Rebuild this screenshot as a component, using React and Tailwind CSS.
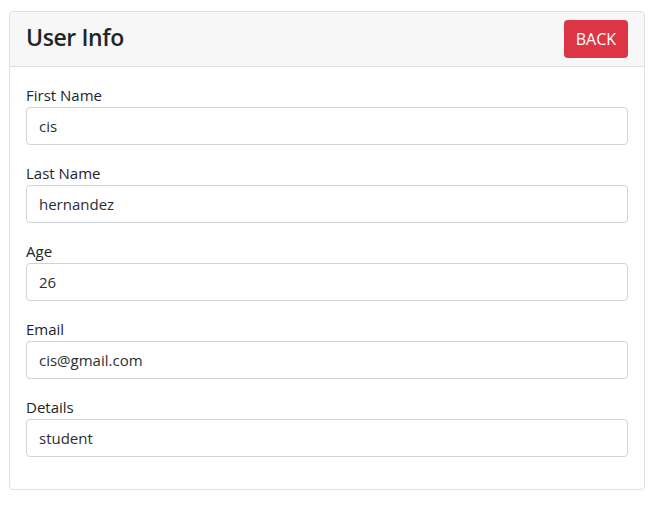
import { useState } from "react";

const fields = [
  { name: "firstName", label: "First Name", value: "cis" },
  { name: "lastName", label: "Last Name", value: "hernandez" },
  { name: "age", label: "Age", value: "26" },
  { name: "email", label: "Email", value: "cis@gmail.com" },
  { name: "details", label: "Details", value: "student" },
];

const App = () => {
  const [formData, setFormData] = useState(
    Object.fromEntries(fields.map((f) => [f.name, f.value]))
  );

  const handleChange = (e) => {
    setFormData({ ...formData, [e.target.name]: e.target.value });
  };

  return (
    <div
      className="min-h-[528px] bg-white pl-[9px] pt-[11px] text-[#212529]"
      style={{ fontFamily: '"Open Sans", "Noto Sans", Arial, sans-serif' }}
    >
      <div className="w-[636px] rounded border border-[#dfdfdf] bg-white">
        {/* Header */}
        <div className="flex h-[55px] items-center justify-between rounded-t border-b border-[#dfdfdf] bg-[#f7f7f7] px-4">
          <h3 className="mb-[3px] text-[23px] font-semibold leading-none tracking-[-0.4px]">
            User Info
          </h3>
          <button className="h-[38px] rounded bg-[#dc3545] px-3 text-[16px] leading-6 text-white">
            BACK
          </button>
        </div>

        {/* Body */}
        <div className="p-4">
          {fields.map((field) => (
            <div key={field.name} className="mb-4">
              <label
                htmlFor={field.name}
                className="block text-[15px] leading-6"
              >
                {field.label}
              </label>
              <input
                type="text"
                id={field.name}
                name={field.name}
                value={formData[field.name]}
                onChange={handleChange}
                className="block h-[38px] w-full rounded border border-[#ced4da] px-3 text-[15px] text-[#2b2f33] outline-none"
              />
            </div>
          ))}
        </div>
      </div>
    </div>
  );
};

export default App;
